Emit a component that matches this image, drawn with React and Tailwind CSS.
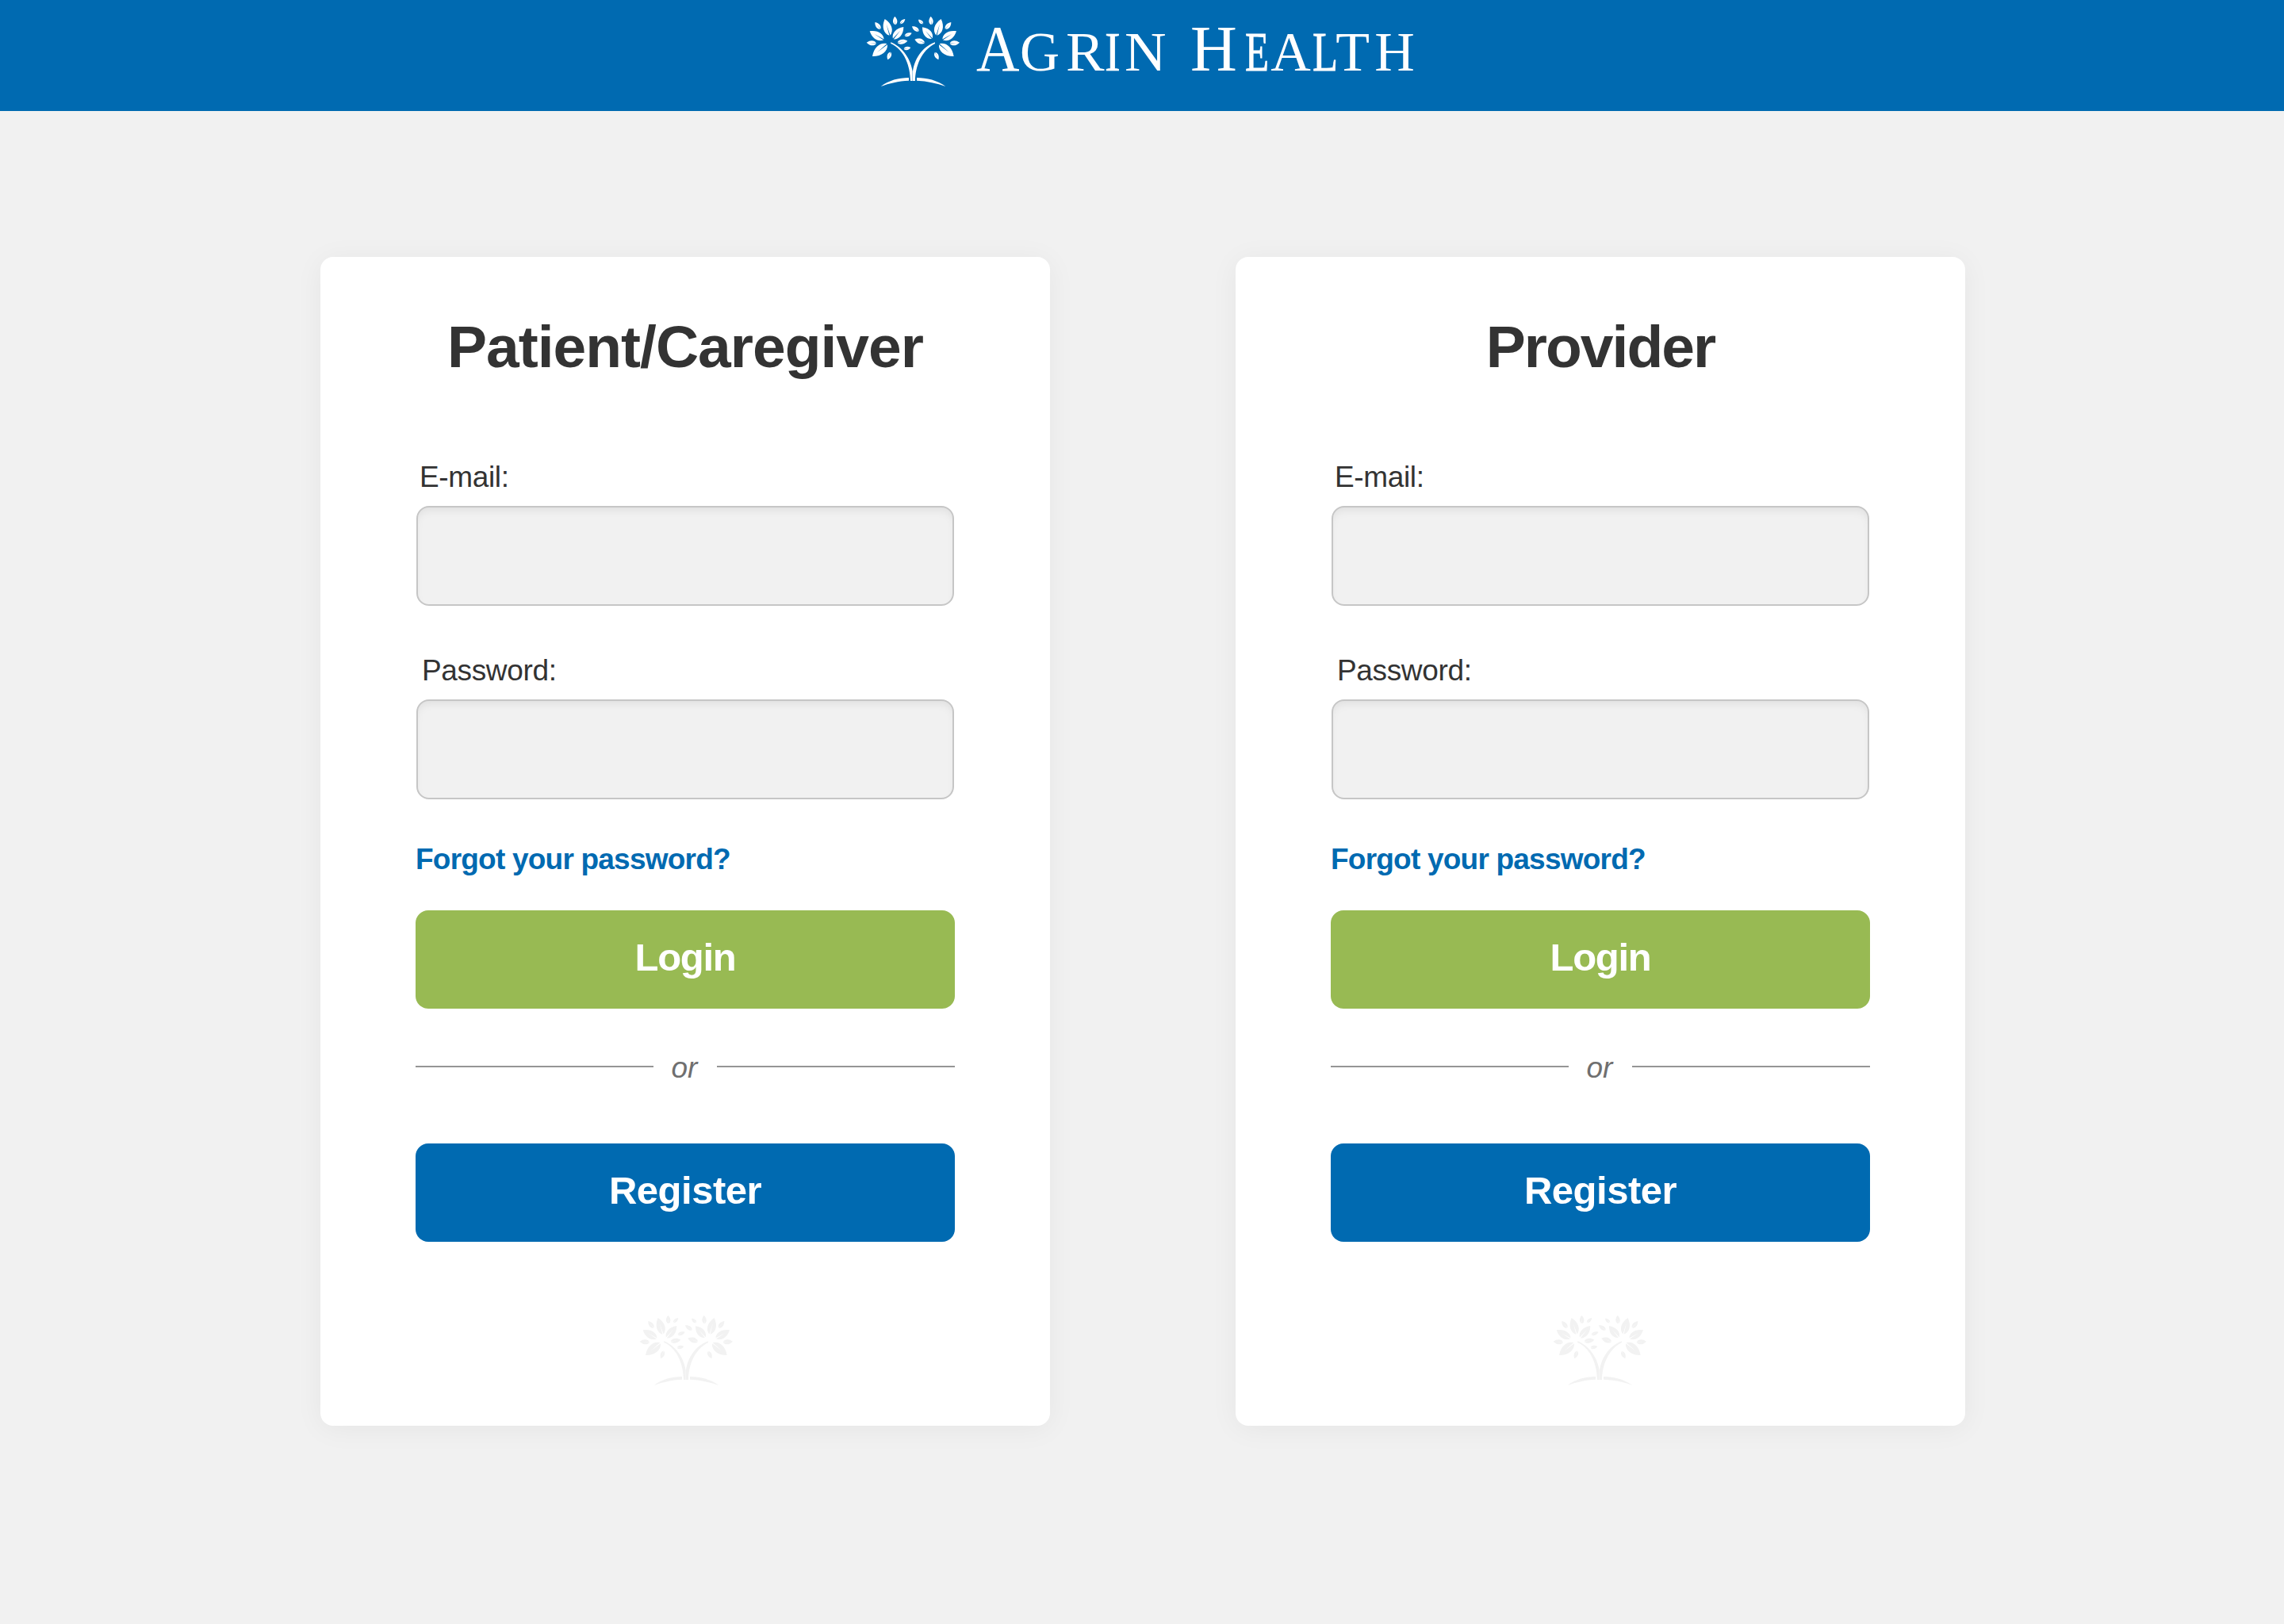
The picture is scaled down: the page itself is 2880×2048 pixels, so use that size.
// Each leaf: base x, base y, tip x, tip y, width.
const LEAVES = [
  [91, 80, 70, 54, 16], [126, 104, 107, 42, 31], [147, 64, 145, 32, 16], [165, 60, 184, 42, 11],
  [139, 117, 178, 72, 28], [182, 106, 209, 95, 13], [103, 120, 50, 88, 29], [75, 134, 38, 131, 18],
  [116, 137, 60, 183, 34], [155, 131, 193, 125, 17], [179, 155, 205, 150, 13], [129, 167, 118, 196, 15],
  [252, 60, 234, 44, 12], [283, 64, 281, 32, 16], [303, 104, 320, 42, 31], [336, 80, 358, 54, 16],
  [286, 116, 249, 73, 28], [236, 88, 210, 70, 15], [326, 120, 378, 88, 29], [353, 134, 390, 131, 18],
  [313, 137, 368, 183, 34], [258, 132, 220, 119, 19], [297, 168, 310, 196, 15],
];

function Leaf({ leaf: [bx, by, tx, ty, w] }) {
  const len = Math.hypot(tx - bx, ty - by);
  const angle = (Math.atan2(ty - by, tx - bx) * 180) / Math.PI;
  const s = w > 25 ? 1.8 : 0.7;
  const h = w * 0.98;
  const d = `M0 ${-s} C${len * 0.2} ${-h * 0.66} ${len * 0.62} ${-h * 0.7} ${len} 0 C${len * 0.62} ${h * 0.7} ${len * 0.2} ${h * 0.66} 0 ${s} L${len * 0.68} 0 Z`;
  return <path d={d} transform={`translate(${bx} ${by}) rotate(${angle})`} />;
}

function Tree({ className }) {
  return (
    <svg viewBox="0 0 420 330" fill="currentColor" className={className} aria-hidden="true">
      {LEAVES.map((leaf, i) => (
        <Leaf key={i} leaf={leaf} />
      ))}
      <path d="M130 130 C176 149 206 196 212 240 L212 276 L204 276 C203 222 184 160 129 134 Z" />
      <path d="M297 130 C246 149 219 196 213 240 L213 276 L222 276 C222 222 246 160 297 135 Z" />
      <path d="M92 297 C122 274 160 264 198 264 L198 275 C158 277 124 285 92 297 Z" />
      <path d="M337 297 C306 274 266 264 228 264 L228 275 C268 277 304 285 337 297 Z" />
    </svg>
  );
}

const WORDMARK = [
  ["A", "w-[54.8px] text-[83px] scale-x-[0.91]"],
  ["G", "w-[58.2px] scale-x-[0.99]"],
  ["R", "w-[48.7px] scale-x-[1.04]"],
  ["I", "w-[25.7px] scale-x-[0.85] [-webkit-text-stroke:0.7px_white]"],
  ["N", "w-[50.5px] scale-x-[1.04]"],
  [" ", "w-[32.6px]"],
  ["H", "w-[68.9px] text-[83px] scale-x-[0.98]"],
  ["E", "w-[31.8px] scale-x-[0.7] [-webkit-text-stroke:0.8px_white]"],
  ["A", "w-[52.8px]"],
  ["L", "w-[29.3px] scale-x-[0.75] [-webkit-text-stroke:0.8px_white]"],
  ["T", "w-[48.9px]"],
  ["H", "w-[50px]"],
];

// Every letter sits in a slot of its own width, which gives the wordmark its display-face proportions.
function Wordmark() {
  return (
    <h1 className="mt-4 h-[90px] whitespace-nowrap font-['Liberation_Serif',serif] text-[70px] leading-[90px] text-white">
      {WORDMARK.map(([char, cls], i) => (
        <span key={i} className={`inline-block origin-left whitespace-pre leading-[90px] ${cls}`}>
          {char}
        </span>
      ))}
    </h1>
  );
}

function Field({ label, type, labelClass, className }) {
  return (
    <label className={`block ${className}`}>
      <span className={`block text-[37px] leading-[44px] tracking-[-0.35px] ${labelClass}`}>{label}</span>
      <input
        type={type}
        className="mx-px mt-[14px] block h-[126px] w-[678px] rounded-2xl border-2 border-[#c6c6c6] bg-[#f1f1f1] px-6 text-4xl shadow-[inset_0_7px_12px_-4px_rgba(0,0,0,0.08)] outline-none"
      />
    </label>
  );
}

function LoginCard({ title, titleClass, treeClass }) {
  return (
    <section className="h-[1474px] w-[920px] rounded-2xl bg-white px-[120px] shadow-[0_4px_36px_rgba(0,0,0,0.05)]">
      <h2 className={`-mx-10 pt-[68px] text-center text-[75px] leading-[90px] font-bold text-[#333] ${titleClass}`}>
        {title}
      </h2>
      <Field label="E-mail:" type="email" labelClass="pl-[5px]" className="mt-[98px]" />
      <Field label="Password:" type="password" labelClass="pl-[8px]" className="mt-[60px]" />
      <a
        href="#"
        className="mt-[54px] block text-[37px] leading-[44px] font-bold tracking-[-0.78px] text-[#006ab1]"
      >
        Forgot your password?
      </a>
      <button className="mt-[42px] block h-[124px] w-full rounded-2xl bg-[#98ba53] pb-1 text-[49px] font-bold tracking-[-1.3px] text-white">
        Login
      </button>
      <div className="mt-[51px] flex h-11 items-center justify-between text-[#6f6f6f]">
        <span className="h-0.5 w-[300px] bg-[#959595]" />
        <span className="pt-1 pr-[2px] text-[37px] leading-[44px] italic">or</span>
        <span className="h-0.5 w-[300px] bg-[#959595]" />
      </div>
      <button className="mt-[75px] block h-[124px] w-full rounded-2xl bg-[#006ab1] pb-1 text-[49px] font-bold tracking-[-0.5px] text-white">
        Register
      </button>
      <Tree className={`mt-[82px] h-[110px] w-[140px] text-[#f2f2f2] ${treeClass}`} />
    </section>
  );
}

export default function App() {
  return (
    <div className="h-[2048px] w-[2880px] overflow-hidden bg-[#f1f1f1] font-['Liberation_Sans',Arial,sans-serif] text-[#333]">
      <header className="flex h-[140px] items-start bg-[#006ab1] pl-[1080px]">
        <Tree className="mt-[10px] h-[110px] w-[140px] shrink-0 text-white" />
        <div className="ml-[11px]">
          <Wordmark />
        </div>
      </header>
      <main className="flex gap-[234px] pt-[184px] pl-[404px]">
        <LoginCard title="Patient/Caregiver" titleClass="tracking-[-1px]" treeClass="ml-[270px]" />
        <LoginCard title="Provider" titleClass="tracking-[-2px]" treeClass="ml-[268px]" />
      </main>
    </div>
  );
}
